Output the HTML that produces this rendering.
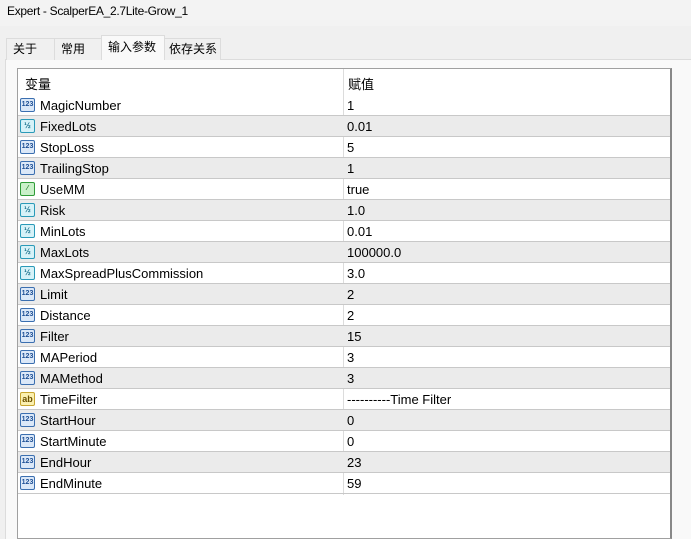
<!DOCTYPE html>
<html><head><meta charset="utf-8"><style>
*{margin:0;padding:0;box-sizing:border-box}
body{width:691px;height:539px;overflow:hidden;background:#f0f0f0;font-family:"Liberation Sans","Noto Sans CJK SC",sans-serif;font-size:13px;color:#000;position:relative}
.title{position:absolute;left:0;top:0;width:691px;height:26px;background:#f3f3f3;padding:4px 0 0 7px;font-size:12px;letter-spacing:-0.3px}
.tab{position:absolute;top:38px;height:22px;border:1px solid #dcdcdc;border-bottom:none;background:#f0f0f0;padding:1px 0 0 6px;font-size:12px}
.tab.act{top:35px;height:25px;background:#f9f9f9;padding-top:2px;z-index:2}
.panel{position:absolute;left:5px;top:59px;width:686px;height:480px;background:#f9f9f9;border-left:1px solid #dcdcdc;border-top:1px solid #dcdcdc}
.tbl{position:absolute;left:17px;top:68px;width:655px;height:471px;background:#fff;border:1px solid #a0a0a0;border-right:2px solid #888}
.hdr{position:absolute;left:0;top:0;width:652px;height:26px}
.hdr span{position:absolute;top:5px}
.row{position:absolute;left:0;width:652px;height:21px;border-bottom:1px solid #c8c8c8}
.row.g{background:#ebebeb}
.row .n{position:absolute;left:22px;top:3px}
.row .v{position:absolute;left:329px;top:3px}
.col{position:absolute;left:325px;top:0;width:1px;height:426px;background:#dcdcdc}
.ic{position:absolute;left:2px;top:3px;width:15px;height:14px;border-radius:2px;font-size:7px;font-weight:bold;text-align:center;line-height:12px;font-style:normal}
.i123{background:#dbe8f8;border:1px solid #3b6fb0;color:#1d4f95}
.ih{background:#d6f2f8;border:1px solid #2a9ab8;color:#136e8a;font-size:8px}
.ib{background:#c9f0c9;border:1px solid #2f9c38;color:#1c7a24}
.ia{background:#fbf0b0;border:1px solid #c7a530;color:#6b5000;font-size:9px}
</style></head><body>
<div class="title">Expert - ScalperEA_2.7Lite-Grow_1</div>
<div class="panel"></div>
<div class="tab" style="left:6px;width:49px">关于</div>
<div class="tab" style="left:54px;width:48px">常用</div>
<div class="tab act" style="left:101px;width:64px">输入参数</div>
<div class="tab" style="left:164px;width:57px;padding-left:4px">依存关系</div>
<div class="tbl">
<div class="hdr"><span style="left:7px">变量</span><span style="left:330px">赋值</span></div>
<div class="col"></div>
<div class="row" style="top:26px"><i class="ic i123">123</i><span class="n">MagicNumber</span><span class="v">1</span></div>
<div class="row g" style="top:47px"><i class="ic ih">½</i><span class="n">FixedLots</span><span class="v">0.01</span></div>
<div class="row" style="top:68px"><i class="ic i123">123</i><span class="n">StopLoss</span><span class="v">5</span></div>
<div class="row g" style="top:89px"><i class="ic i123">123</i><span class="n">TrailingStop</span><span class="v">1</span></div>
<div class="row" style="top:110px"><i class="ic ib">⁄</i><span class="n">UseMM</span><span class="v">true</span></div>
<div class="row g" style="top:131px"><i class="ic ih">½</i><span class="n">Risk</span><span class="v">1.0</span></div>
<div class="row" style="top:152px"><i class="ic ih">½</i><span class="n">MinLots</span><span class="v">0.01</span></div>
<div class="row g" style="top:173px"><i class="ic ih">½</i><span class="n">MaxLots</span><span class="v">100000.0</span></div>
<div class="row" style="top:194px"><i class="ic ih">½</i><span class="n">MaxSpreadPlusCommission</span><span class="v">3.0</span></div>
<div class="row g" style="top:215px"><i class="ic i123">123</i><span class="n">Limit</span><span class="v">2</span></div>
<div class="row" style="top:236px"><i class="ic i123">123</i><span class="n">Distance</span><span class="v">2</span></div>
<div class="row g" style="top:257px"><i class="ic i123">123</i><span class="n">Filter</span><span class="v">15</span></div>
<div class="row" style="top:278px"><i class="ic i123">123</i><span class="n">MAPeriod</span><span class="v">3</span></div>
<div class="row g" style="top:299px"><i class="ic i123">123</i><span class="n">MAMethod</span><span class="v">3</span></div>
<div class="row" style="top:320px"><i class="ic ia">ab</i><span class="n">TimeFilter</span><span class="v">----------Time Filter</span></div>
<div class="row g" style="top:341px"><i class="ic i123">123</i><span class="n">StartHour</span><span class="v">0</span></div>
<div class="row" style="top:362px"><i class="ic i123">123</i><span class="n">StartMinute</span><span class="v">0</span></div>
<div class="row g" style="top:383px"><i class="ic i123">123</i><span class="n">EndHour</span><span class="v">23</span></div>
<div class="row" style="top:404px"><i class="ic i123">123</i><span class="n">EndMinute</span><span class="v">59</span></div>
</div>
</body></html>
